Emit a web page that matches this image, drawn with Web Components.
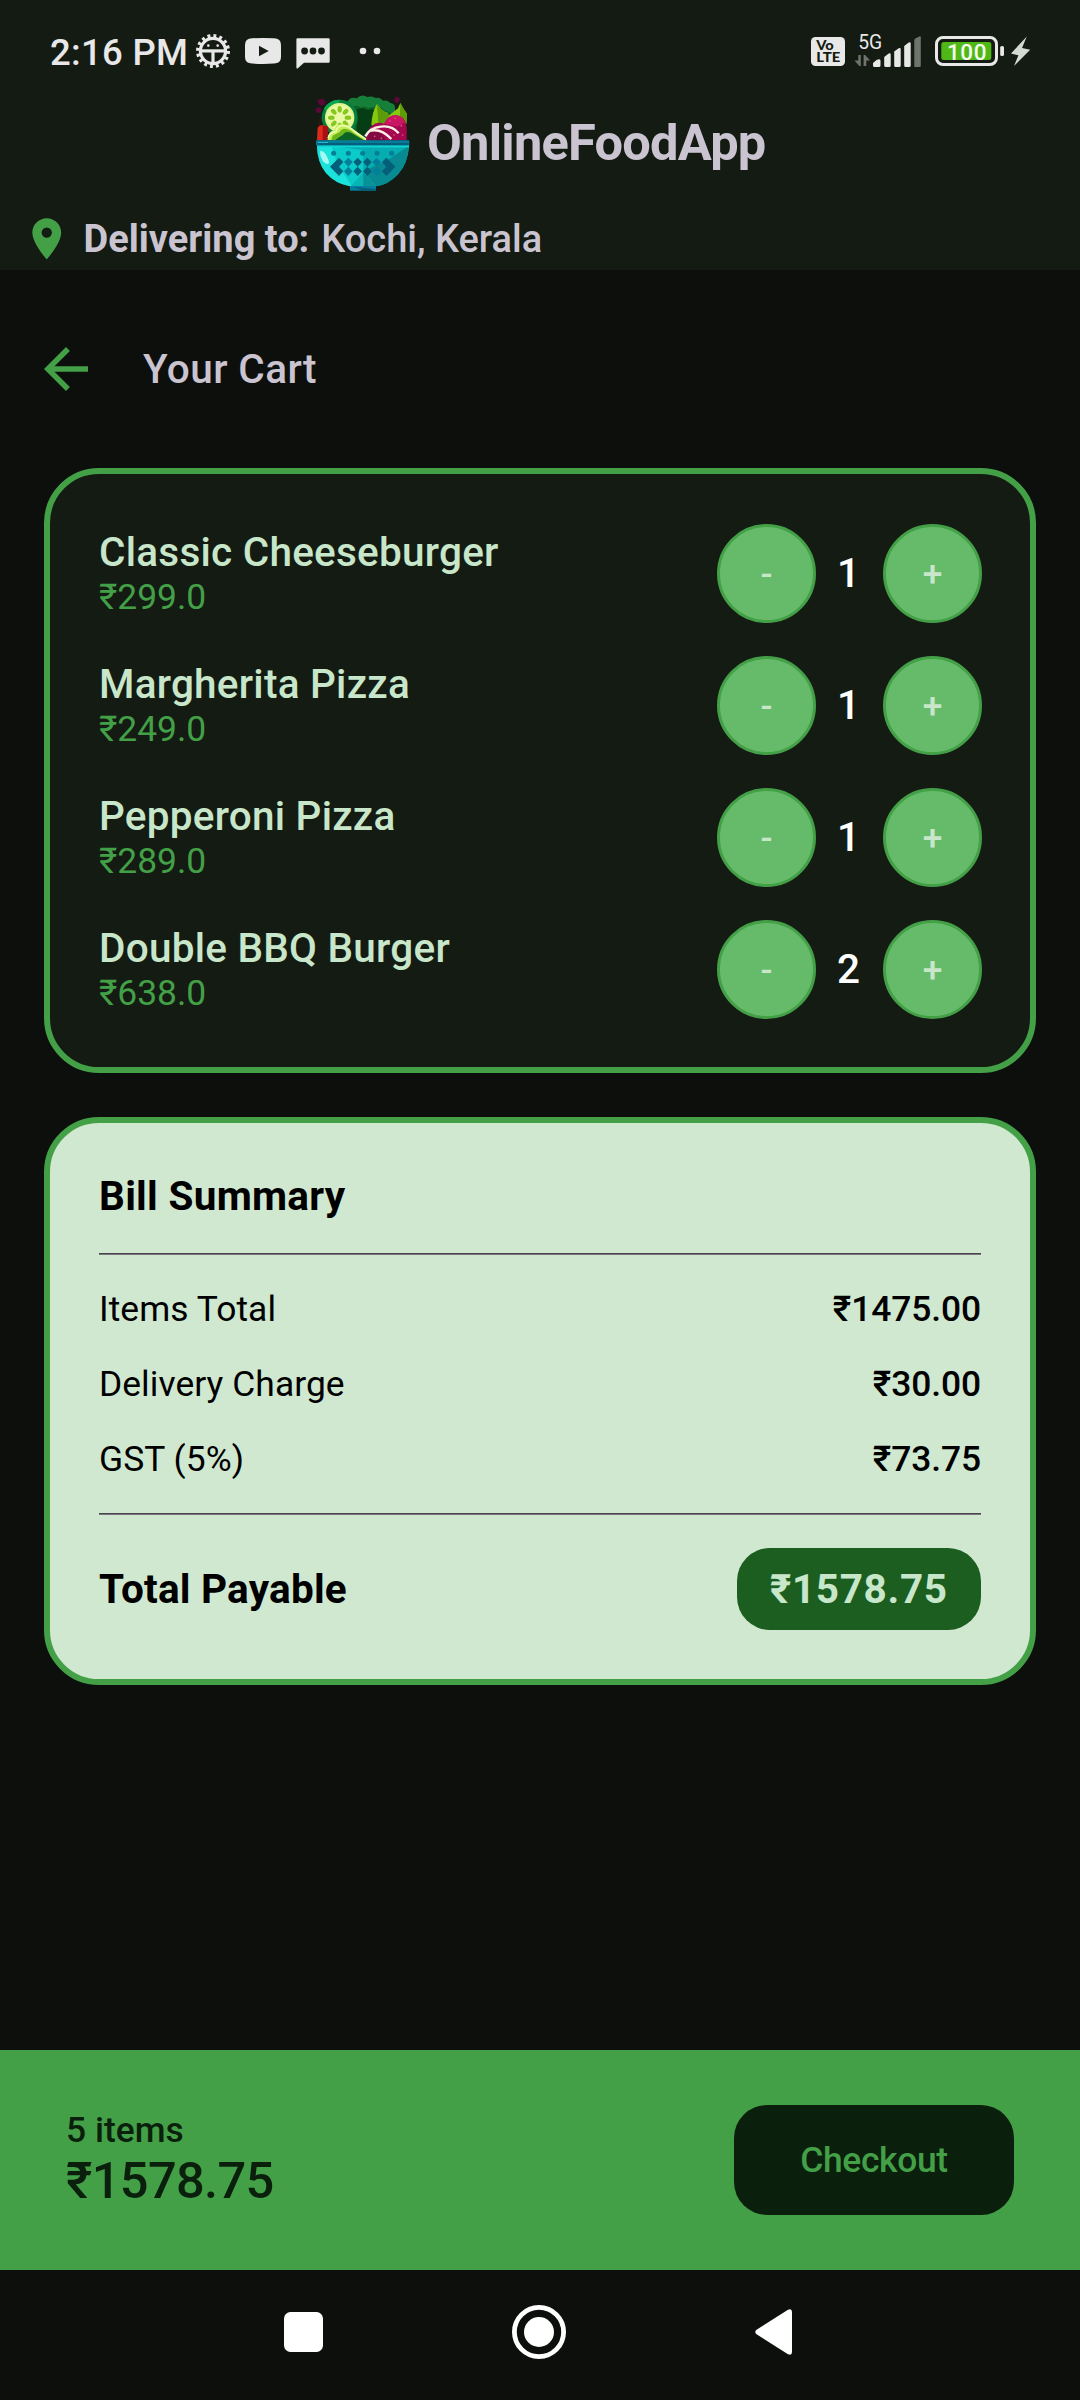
<!DOCTYPE html>
<html lang="en">
<head>
<meta charset="utf-8">
<title>OnlineFoodApp</title>
<style>
  html, body { margin: 0; background: #0D0F0C; }
  body { font-family: Roboto, "Liberation Sans", sans-serif; width: 1080px; height: 2400px; overflow: hidden; }
</style>
</head>
<body>
<food-app></food-app>
<script>
const define = (name, html) => {
  const t = document.createElement('template');
  t.innerHTML = html;
  customElements.define(name, class extends HTMLElement {
    constructor() {
      super();
      this.attachShadow({ mode: 'open' }).append(t.content.cloneNode(true));
    }
  });
};

define('status-bar', `
<style>
  :host { display: flex; height: 85px; color: #E8E8E8; }
  .clock { box-sizing: border-box; width: 190px; padding: 20px 0 0 50px; font: 500 36.5px/65px Roboto; letter-spacing: .3px; white-space: nowrap; }
  svg { display: block; flex: none; }
  .right { margin-left: auto; }
</style>
<div class="clock">2:16 PM</div>
<svg width="200" height="85" viewBox="190 0 200 85" fill="#E8E8E8">
  <circle cx="213" cy="51" r="12.6" fill="none" stroke="#E8E8E8" stroke-width="3.2"/>
  <circle cx="213" cy="51" r="15.2" fill="none" stroke="#E8E8E8" stroke-width="3.6" stroke-dasharray="2.9 3.067"/>
  <rect x="200" y="49.3" width="26" height="3.2"/>
  <rect x="211.4" y="51" width="3.2" height="13"/>
  <circle cx="208.3" cy="45.6" r="1.3"/><circle cx="217.7" cy="45.6" r="1.3"/>
  <path d="M252 38.3Q263 37.5 274 38.3Q281 38.5 281 45V57Q281 63.3 274 63.6Q263 64.2 252 63.6Q245 63.3 245 57V45Q245 38.5 252 38.3Z"/>
  <path d="M259 45.7v10.6l9.7-5.3z" fill="#141B13"/>
  <path d="M297.500 38.300H328.500Q329.700 38.300 329.700 39.500V61.500Q329.700 62.700 328.500 62.700H304L297.600 68.400Q296.400 69 296.400 67.600V39.500Q296.400 38.300 297.500 38.300Z"/>
  <g fill="#141B13"><circle cx="304.600" cy="51" r="3.400"/><circle cx="313" cy="51" r="3.400"/><circle cx="321.500" cy="51" r="3.400"/></g>
  <circle cx="363" cy="51" r="3.300"/><circle cx="377" cy="51" r="3.300"/>
</svg>
<svg class="right" width="280" height="85" viewBox="800 0 280 85" fill="#E8E8E8" font-family="Roboto">
  <rect x="811" y="37" width="34" height="29" rx="4.500"/>
  <g fill="#141B13" font-family="Lato, sans-serif" font-weight="900">
    <text x="816.300" y="50" font-size="13" textLength="17.500" lengthAdjust="spacingAndGlyphs">Vo</text>
    <text x="816.300" y="62.300" font-size="13.200" textLength="24" lengthAdjust="spacingAndGlyphs">LTE</text>
  </g>
  <text x="858.200" y="49.200" font-size="21" textLength="24" lengthAdjust="spacingAndGlyphs">5G</text>
  <g fill="#6E736D">
    <path d="M858.300 55h2.500v11h-1.500l-4.800-5.500h3.800zM863.600 66V55h1.500l5 5.500h-3.800V66z"/>
    <path d="M914.300 67V40.500q0-1.500 1.500-2.300l4-2q1-.3 1 1V65.500q0 1.500-1.500 1.500z"/>
  </g>
  <path d="M873 65.500v-2.500l3.500-3q3.500-1.500 4 .5V65.500q0 1.500-1.500 1.500h-4.500q-1.500 0-1.500-1.500zM884.200 65.500V57l4.500-3.500q2-.8 2 .8V65.500q0 1.500-1.500 1.500h-3.500q-1.500 0-1.500-1.500zM894.200 65.500V51.500l4.500-3.300q2-.8 2 .8V65.500q0 1.500-1.500 1.500h-3.500q-1.500 0-1.500-1.500zM904.200 65.500V46l4.500-3.500q2-.8 2 .8V65.500q0 1.500-1.500 1.500h-3.500q-1.500 0-1.500-1.500z"/>
  <rect x="936.500" y="37.500" width="60" height="27" rx="6.500" fill="none" stroke="#E8E8E8" stroke-width="3"/>
  <rect x="941.300" y="42" width="50" height="18" rx="2.500" fill="#4FB817"/>
  <rect x="1000.200" y="46" width="3.800" height="10" rx="1.600"/>
  <text x="947" y="59.900" font-size="22.500" font-weight="500" fill="#F4FBF0" textLength="39.500">100</text>
  <path d="M1026.800 36.500L1011 53.500L1018.400 55.300L1014 66L1030.200 49.700L1022 48Z" fill="#D6DAD5"/>
</svg>`);

define('salad-logo', `
<style>:host { display: block; width: 125px; height: 115px; } svg { display: block; }</style>
<svg width="125" height="115" viewBox="0 0 375 345">
  <path d="M54 44l14-3 9 9-2 9-14 3-7-8zM48 70l9-4 8 6-3 11-10 1-5-6zM284 38l10-3 6 6-3 10-9 3-5-6z" fill="#5B0838"/>
  <path d="M145 45q10-10 25-5q15-15 32-4q12-4 25 3q14-3 22 8q14-2 22 7q14 2 14 14L285 110L220 166H140V60z" fill="#16803A"/>
  <path d="M158 66q12-8 24 2q12-8 24 2q12-6 24-3q12-4 22 8l20 8v82H150z" fill="#0B6426"/>
  <path d="M170 72q20-6 34 4q14-8 22 2l-6 88h-50z" fill="#053D14"/>
  <circle cx="119" cy="98" r="54" fill="#067F3E"/>
  <path d="M72 70A54 54 0 0 1 119 44L115 60A40 40 0 0 0 80 80z" fill="#0AA653"/>
  <circle cx="119" cy="98" r="44" fill="#DDF58B"/>
  <circle cx="119" cy="98" r="38" fill="#E9F9A6"/>
  <g fill="#86C81E">
    <ellipse cx="119" cy="73" rx="6.500" ry="10"/><ellipse cx="119" cy="73" rx="6.500" ry="10" transform="rotate(45 119 98)"/>
    <ellipse cx="119" cy="73" rx="6.500" ry="10" transform="rotate(90 119 98)"/><ellipse cx="119" cy="73" rx="6.500" ry="10" transform="rotate(135 119 98)"/>
    <ellipse cx="119" cy="73" rx="6.500" ry="10" transform="rotate(180 119 98)"/><ellipse cx="119" cy="73" rx="6.500" ry="10" transform="rotate(225 119 98)"/>
    <ellipse cx="119" cy="73" rx="6.500" ry="10" transform="rotate(270 119 98)"/><ellipse cx="119" cy="73" rx="6.500" ry="10" transform="rotate(315 119 98)"/>
  </g>
  <path d="M58 122l4-24" stroke="#4A1210" stroke-width="4"/>
  <path d="M51 166l2-38q4-8 14-8l14 4q6 6 4 14l-6 28z" fill="#DE2A1C"/>
  <path d="M68 122l14 2q5 5 3 14l-6 28H68z" fill="#A90F14"/>
  <path d="M82 166l4-18q8-12 18-12q2-20 24-20q18 4 34 18l42 32z" fill="#C4EE55"/>
  <path d="M94 166l4-14q12-6 20-10q8-14 22-10q12 2 24 14l30 20z" fill="#6DB51C"/>
  <path d="M104 166q14-10 24-16q8-14 26-6l38 22z" fill="#0B6426"/>
  <path d="M84 160q6-20 24-20q4-20 22-18q18 2 32 16l38 26" fill="none" stroke="#EDFBB0" stroke-width="5"/>
  <path d="M214 120q2-40 17-63l6 8q10 14 27 18l4 36-30 14z" fill="#87C70F"/>
  <path d="M231 57l4 60 30-4V84q-22-4-34-27z" fill="#5E9B08"/>
  <path d="M264 94l30-24 7-16 10 18 10 14-2 30-24 6z" fill="#87C70F"/>
  <path d="M301 54l10 18 10 16-2 28-20-6z" fill="#5E9B08"/>
  <path d="M198 166q2-36 26-50q16-6 28 0q14-26 36-25q32 4 32 44v31z" fill="#A60850"/>
  <path d="M252 116q14-26 36-25q20 2 28 20l-24 14z" fill="#C91562"/>
  <path d="M206 146q8-16 22-10q18 4 30 30h-54z" fill="#820A43"/>
  <g fill="#E85590"><circle cx="270" cy="108" r="2.500"/><circle cx="286" cy="100" r="2.500"/><circle cx="304" cy="122" r="2.500"/><circle cx="282" cy="150" r="2.500"/><circle cx="308" cy="150" r="2.500"/><circle cx="224" cy="154" r="2.500"/><circle cx="244" cy="160" r="2.500"/></g>
  <path d="M196 154q14-26 46-29q34-5 54 20M208 138q34-10 66 24" fill="none" stroke="#FBEFE6" stroke-width="7"/>
  <path d="M51 182H327Q324 234 294 268Q264 300 228 304H150Q106 296 78 264Q52 232 51 182Z" fill="#06ACB0"/>
  <path d="M51 182H110L152 252L190 304H150Q106 296 78 264Q52 232 51 182Z" fill="#1BE2DB"/>
  <path d="M94 182L190 196V272L156 304Q134 270 112 238Z" fill="#0BCBC8"/>
  <path d="M327 182Q324 234 294 268Q264 300 228 304L190 258L262 226Z" fill="#078A92"/>
  <path d="M190 262L228 304H152Z" fill="#08B4B6"/>
  <path d="M190 262L228 304H190Z" fill="#079298"/>
  <rect x="51" y="180" width="276" height="7" fill="#12D6D6"/>
  <rect x="48" y="166" width="280" height="15" rx="2" fill="#057C9A"/>
  <path d="M52 174H326V181H52z" fill="#075E7B"/>
  <path d="M54 171H84v3H54z" fill="#27B9D3"/>
  <path d="M60 199q10-4 20 14q10 18 5 24q-8 2-17-10q-9-14-8-28z" fill="#A4FAF2"/>
  <g fill="#047D97"><circle cx="101" cy="205" r="7.500"/><circle cx="145" cy="205" r="7.500"/><circle cx="188" cy="205" r="7.500"/><circle cx="231" cy="205" r="7.500"/><circle cx="275" cy="205" r="7.500"/></g>
  <g fill="#045F7A">
    <path d="M90 245L117 218L130 231L117 245L130 259L117 273zM286 245L259 218L246 231L259 245L246 259L259 273z"/>
    <path d="M173 218l13 13-13 14-13-14zM173 245l13 14-13 14-13-14zM202 218l13 13-13 14-13-14zM202 245l13 14-13 14-13-14z"/>
  </g>
  <path d="M145 218l13 13-13 14-13-14zM145 245l13 14-13 14-13-14zM230 218l13 13-13 14-13-14zM230 245l13 14-13 14-13-14z" fill="#037F9B"/>
  <rect x="150" y="303" width="78" height="14" fill="#047F9D"/>
  <path d="M160 306L228 312V317H190z" fill="#06607D"/>
</svg>`);

define('app-header', `
<style>
  :host { display: block; height: 270px; background: #141B13; color: #CAC4D0; }
  .brand { display: flex; align-items: center; height: 115px; padding-left: 300px; font: 700 50.6px/60px Roboto; letter-spacing: -.78px; }
  .brand span { margin-left: 2px; }
  .place { box-sizing: border-box; display: flex; align-items: center; gap: 12px; height: 70px; padding: 8px 0 0 22px; font: 500 38px/46px Roboto; white-space: nowrap; }
  b { font-weight: 700; }
  svg { display: block; }
</style>
<status-bar></status-bar>
<div class="brand"><salad-logo></salad-logo><span>OnlineFoodApp</span></div>
<div class="place">
  <svg width="49.5" height="49.5" viewBox="0 0 24 24" fill="#43A047"><path d="M12 2C8.130 2 5 5.130 5 9c0 5.250 7 13 7 13s7-7.750 7-13c0-3.870-3.130-7-7-7zm0 9.500a2.500 2.500 0 1 1 0-5 2.500 2.500 0 0 1 0 5z"/></svg>
  <b>Delivering to:</b><span>Kochi, Kerala</span>
</div>`);

define('page-title', `
<style>
  :host { display: flex; align-items: center; gap: 44px; height: 198px; padding-left: 33px; color: #CAC4D0; font: 500 40.5px/48px Roboto; letter-spacing: .4px; }
  svg { display: block; }
</style>
<svg width="66" height="66" viewBox="0 0 24 24" fill="#43A047"><path d="M20 11H7.830l5.590-5.590L12 4l-8 8 8 8 1.410-1.410L7.830 13H20v-2z"/></svg>
<slot></slot>`);

define('outline-card', `
<style>
  :host { display: flex; flex-direction: column; gap: 33px; box-sizing: border-box; margin: 0 44px; padding: 50px 48px 48px 49px; border: 6px solid #43A047; border-radius: 55px; background: #141B13; }
  :host([light]) { background: #D0E8D0; padding: 49px; }
</style>
<slot></slot>`);

define('round-button', `
<style>
  :host { box-sizing: border-box; display: flex; align-items: center; justify-content: center; width: 99px; height: 99px; border: 3px solid #43A047; border-radius: 50%; background: #66BB6A; color: #C8E6C9; font: 500 35.4px/42px Roboto; }
</style>
<slot></slot>`);

define('cart-item', `
<style>
  :host { display: flex; align-items: center; justify-content: space-between; height: 99px; }
  .name { font: 500 40.5px/46.800px Roboto; letter-spacing: .24px; color: #C8E6C9; }
  .price { font: 400 35.4px/42.700px Roboto; color: #43A047; }
  .stepper { display: flex; align-items: center; }
  .count { box-sizing: border-box; width: 67px; padding: 0 2px 2px 0; text-align: center; color: #fff; font: 500 40.5px/48px Roboto; }
</style>
<div><div class="name"><slot name="name"></slot></div><div class="price"><slot name="price"></slot></div></div>
<div class="stepper"><round-button>-</round-button><div class="count"><slot name="count"></slot></div><round-button>+</round-button></div>`);

define('card-rule', `<style>:host { display: block; height: 2px; background: linear-gradient(#49454F 50%, #77757B 50%); }</style>`);

define('bill-row', `
<style>
  :host { display: flex; justify-content: space-between; height: 42px; color: #000; font: 400 35.4px/42px Roboto; letter-spacing: .06px; }
  .value { font-weight: 500; letter-spacing: -.1px; }
</style>
<span><slot></slot></span><span class="value"><slot name="value"></slot></span>`);

define('bill-summary', `
<style>
  :host { display: block; margin-top: 44px; color: #000; }
  h2 { margin: 0; font: 700 40.5px/48px Roboto; letter-spacing: .28px; }
  .total { display: flex; align-items: center; justify-content: space-between; height: 82px; font: 700 40.5px/48px Roboto; letter-spacing: .22px; }
  .pill { box-sizing: border-box; width: 244px; height: 82px; padding: 17px 33px; border-radius: 33px; background: #1B5E20; color: #C8E6C9; letter-spacing: .65px; white-space: nowrap; }
</style>
<outline-card light>
  <h2>Bill Summary</h2>
  <card-rule></card-rule>
  <bill-row>Items Total<span slot="value">₹1475.00</span></bill-row>
  <bill-row>Delivery Charge<span slot="value">₹30.00</span></bill-row>
  <bill-row>GST (5%)<span slot="value">₹73.75</span></bill-row>
  <card-rule></card-rule>
  <div class="total"><span>Total Payable</span><span class="pill">₹1578.75</span></div>
</outline-card>`);

define('checkout-bar', `
<style>
  :host { box-sizing: border-box; display: flex; align-items: center; justify-content: space-between; height: 220px; margin-top: auto; padding: 0 66px; background: #43A047; color: #0B1F0D; }
  .items { font: 500 35.4px/41.400px Roboto; }
  .sum { font: 500 50.6px/58.200px Roboto; letter-spacing: -.68px; }
  .go { width: 280px; height: 110px; border-radius: 33px; background: #0B1F0D; color: #43A047; font: 500 35.4px/110px Roboto; letter-spacing: -.35px; text-align: center; }
</style>
<div><div class="items">5 items</div><div class="sum">₹1578.75</div></div>
<div class="go">Checkout</div>`);

define('nav-bar', `
<style>
  :host { box-sizing: border-box; display: flex; align-items: center; gap: 189px; height: 130px; padding: 0 0 6px 284px; }
  svg { display: block; }
</style>
<svg width="39" height="40" fill="#fff"><rect width="39" height="40" rx="6.500"/></svg>
<svg width="54" height="54"><circle cx="27" cy="27" r="24.600" fill="none" stroke="#fff" stroke-width="4.800"/><circle cx="27" cy="27" r="15" fill="#fff"/></svg>
<svg width="37" height="46" fill="#fff"><path d="M1.200 21L33 .8Q37 -.8 37 3V43Q37 46.800 33 45.200L1.200 25Q-.6 23 1.200 21Z"/></svg>`);

define('food-app', `
<style>:host { display: flex; flex-direction: column; width: 1080px; height: 2400px; background: #0D0F0C; }</style>
<app-header></app-header>
<page-title>Your Cart</page-title>
<outline-card>
  <cart-item><span slot="name">Classic Cheeseburger</span><span slot="price">₹299.0</span><span slot="count">1</span></cart-item>
  <cart-item><span slot="name">Margherita Pizza</span><span slot="price">₹249.0</span><span slot="count">1</span></cart-item>
  <cart-item><span slot="name">Pepperoni Pizza</span><span slot="price">₹289.0</span><span slot="count">1</span></cart-item>
  <cart-item><span slot="name">Double BBQ Burger</span><span slot="price">₹638.0</span><span slot="count">2</span></cart-item>
</outline-card>
<bill-summary></bill-summary>
<checkout-bar></checkout-bar>
<nav-bar></nav-bar>`);
</script>
</body>
</html>
